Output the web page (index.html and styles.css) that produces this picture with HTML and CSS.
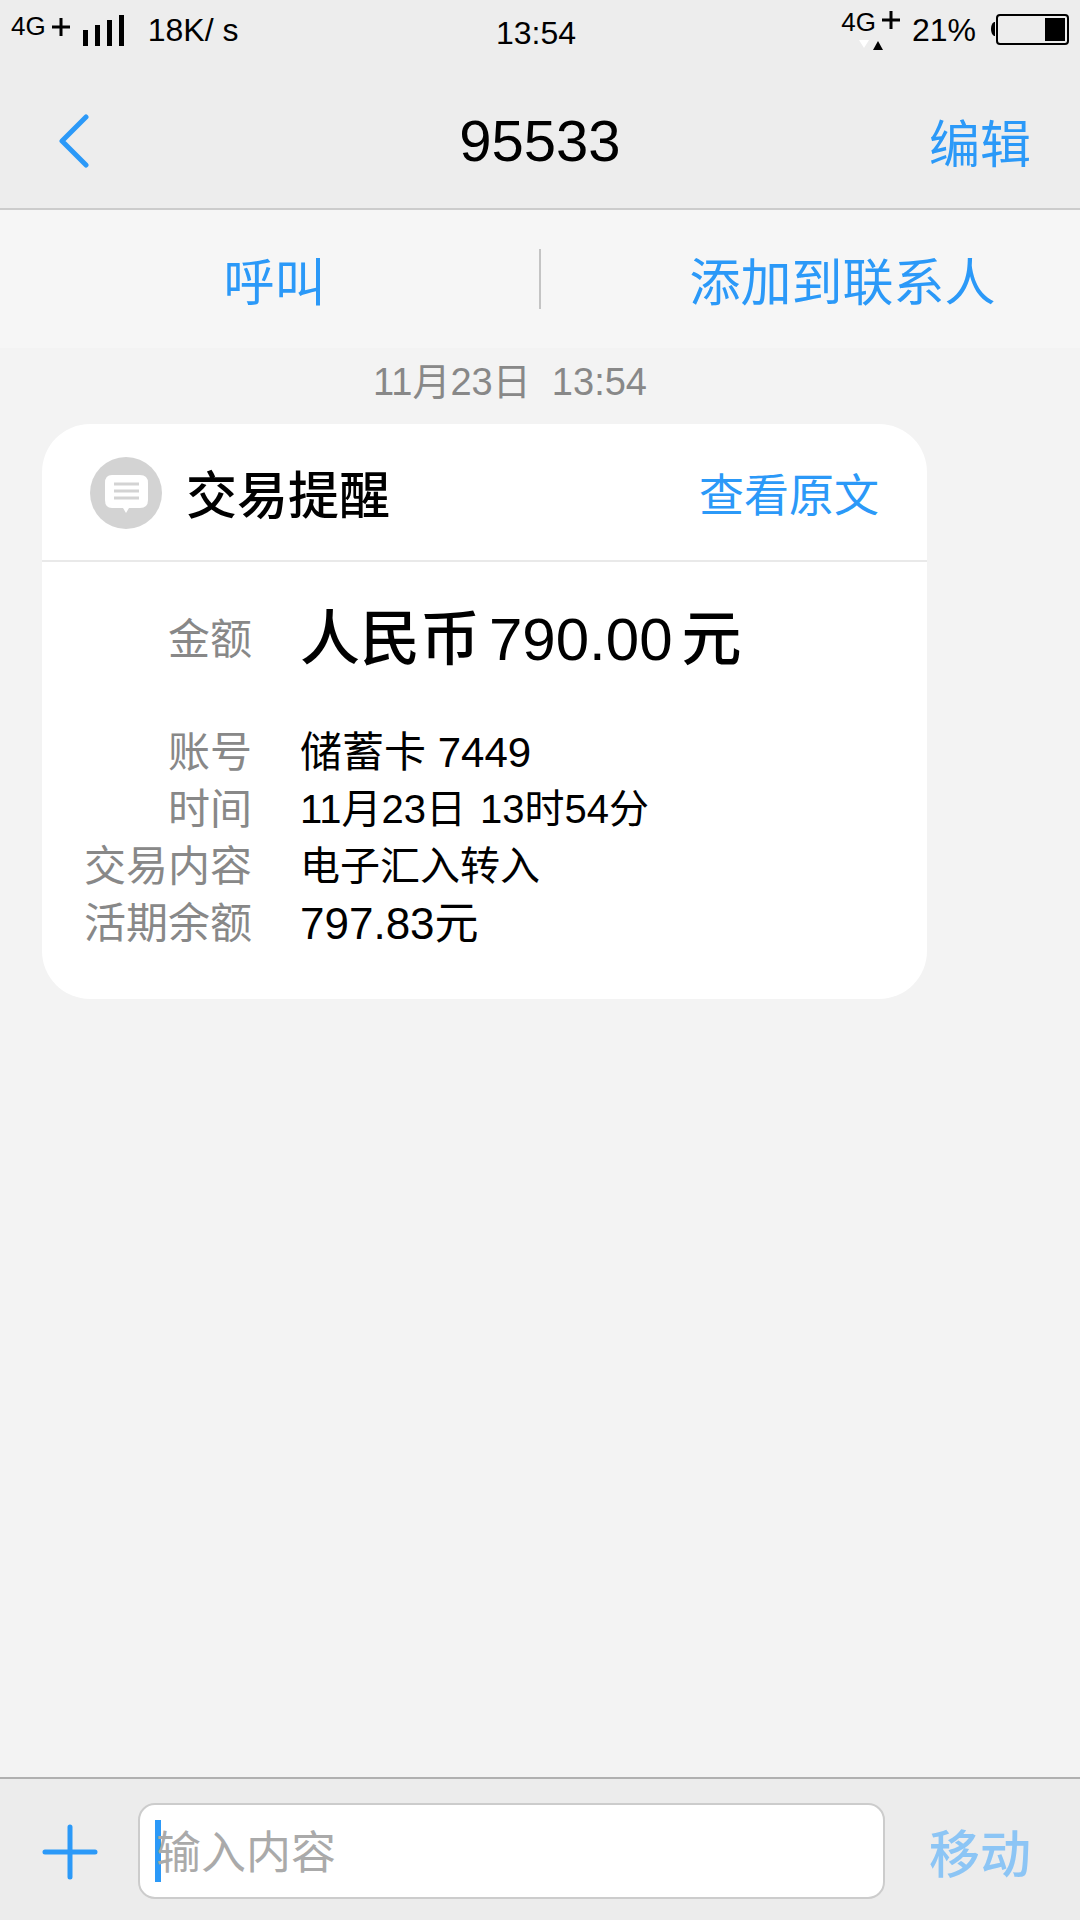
FILE: index.html
```html
<!DOCTYPE html>
<html lang="zh-CN">
<head>
    <meta charset="UTF-8">
    <meta name="viewport" content="width=device-width, initial-scale=1.0">
    <title>95533</title>
    <link rel="stylesheet" href="styles.css">
</head>
<body>
    <div class="status-bar">
        <div class="status-left">
            <span class="network">4G</span>
            <svg class="plus-small" width="18" height="18" viewBox="0 0 18 18"><path d="M9 0v18M0 9h18" stroke="#000" stroke-width="3"/></svg>
            <svg class="signal" width="41" height="31" viewBox="0 0 41 31"><path d="M0 15h5v16H0zM12 10h5v21h-5zM24 5h5v26h-5zM36 0h5v31h-5z"/></svg>
            <span class="speed">18K/ s</span>
        </div>
        <span class="clock">13:54</span>
        <div class="status-right">
            <div class="data">
                <div class="data-top">
                    <span class="network">4G</span>
                    <svg width="18" height="18" viewBox="0 0 18 18"><path d="M9 0v18M0 9h18" stroke="#000" stroke-width="3"/></svg>
                </div>
                <svg class="arrows" width="24" height="10" viewBox="0 0 24 10"><path d="M0 0h10L5 8z" fill="#fff"/><path d="M14 10h10l-5-9z"/></svg>
            </div>
            <span class="percent">21%</span>
            <svg class="battery" width="78" height="31" viewBox="0 0 78 31">
                <path d="M4 8v14H3q-3-2-3-7t3-7z"/>
                <rect x="6" y="1" width="71" height="29" rx="3" fill="none" stroke="#000" stroke-width="2"/>
                <rect x="54" y="4" width="20" height="23"/>
            </svg>
        </div>
    </div>

    <header class="header">
        <a class="back" href="#" aria-label="返回">
            <svg width="30" height="54" viewBox="0 0 30 54"><path d="M27 3L3 27l24 24" fill="none" stroke="#2b99f8" stroke-width="5" stroke-linecap="round" stroke-linejoin="round"/></svg>
        </a>
        <h1>95533</h1>
        <button type="button" class="edit">编辑</button>
    </header>

    <nav class="actions">
        <button type="button" class="call">呼叫</button>
        <span class="divider"></span>
        <button type="button" class="add">添加到联系人</button>
    </nav>

    <main class="messages">
        <p class="date">11月23日&nbsp; 13:54</p>
        <section class="card">
            <div class="card-header">
                <svg class="card-icon" width="72" height="72" viewBox="0 0 72 72">
                    <circle cx="36" cy="36" r="36" fill="#d3d3d3"/>
                    <path d="M22 18h28q8 0 8 8v17q0 8-8 8H39l-3 5-3-5H22q-7 0-7-8V26q0-8 7-8z" fill="#fff"/>
                    <path d="M24 27h25M24 34h25M24 41h25" stroke="#d3d3d3" stroke-width="3"/>
                </svg>
                <h2>交易提醒</h2>
                <a class="original" href="#">查看原文</a>
            </div>
            <dl class="details">
                <dt class="amount-label">金额</dt>
                <dd class="amount"><span>人民币</span><span>790.00</span><span>元</span></dd>
                <dt>账号</dt>
                <dd class="account">储蓄卡 7449</dd>
                <dt>时间</dt>
                <dd class="time"><span>11月23日</span><span>13时54分</span></dd>
                <dt>交易内容</dt>
                <dd>电子汇入转入</dd>
                <dt>活期余额</dt>
                <dd class="balance">797.83元</dd>
            </dl>
        </section>
    </main>

    <form class="composer">
        <button type="button" class="attach" aria-label="添加">
            <svg width="56" height="56" viewBox="0 0 56 56"><path d="M28 3v50M3 28h50" stroke="#2b99f8" stroke-width="5" stroke-linecap="round"/></svg>
        </button>
        <div class="field">
            <input type="text" id="message" aria-label="输入内容" placeholder="输入内容">
        </div>
        <button type="submit" class="send">移动</button>
    </form>
</body>
</html>
```
FILE: styles.css
```css
* {
    box-sizing: border-box;
}
body {
    display: flex;
    flex-direction: column;
    min-height: 100vh;
    margin: 0;
    background-color: #f3f3f3;
    color: #000;
    font-family: "Liberation Sans", "Noto Sans CJK SC", sans-serif;
}
h1, h2, p, dl, dd {
    margin: 0;
}
svg {
    display: block;
}
button {
    padding: 10px 0 0;
    border: none;
    background: none;
    color: #2b99f8;
    font-family: inherit;
    font-size: 51px;
    line-height: 60px;
    cursor: pointer;
}
a {
    color: #2b99f8;
    text-decoration: none;
}

/* status bar */
.status-bar {
    display: grid;
    grid-template-columns: 1fr auto 1fr;
    align-items: start;
    height: 64px;
    padding: 12px 11px 0;
    background-color: #ededed;
    font-size: 32px;
    line-height: 36px;
}
.status-left, .status-right, .data-top {
    display: flex;
    align-items: flex-start;
}
.status-right {
    justify-content: flex-end;
}
.network {
    font-size: 26px;
    line-height: 28px;
}
.plus-small {
    margin: 6px 13px 0 6px;
}
.signal {
    margin: 3px 24px 0 0;
}
.clock {
    padding: 3px 8px 0 0;
}
.data {
    margin-right: 12px;
}
.data-top {
    gap: 6px;
    height: 28px;
    margin-top: -4px;
}
.data-top svg {
    margin-top: 3px;
}
.arrows {
    margin: 4px 0 0 18px;
}
.percent {
    margin-right: 15px;
}
.battery {
    margin-top: 2px;
}

/* title bar */
.header {
    display: grid;
    grid-template-columns: 1fr auto 1fr;
    align-items: center;
    height: 146px;
    padding: 20px 49px 10px 59px;
    border-bottom: 2px solid #ccc;
    background-color: #ededed;
}
.header h1 {
    padding-right: 10px;
    font-size: 58px;
    font-weight: normal;
    line-height: 64px;
}
.edit {
    justify-self: end;
}
.back {
    justify-self: start;
}

.actions {
    display: grid;
    grid-template-columns: 1fr 2px 1fr;
    align-items: center;
    height: 138px;
    background-color: #f6f6f6;
}
.divider {
    height: 60px;
    background-color: #c4c4c4;
}
.actions .call {
    padding-left: 10px;
}
.actions .add {
    padding-left: 64px;
}

/* messages */
.messages {
    flex: 1;
}
.date {
    padding: 6px 60px 14px 0;
    color: #888;
    font-size: 38px;
    line-height: 56px;
    text-align: center;
}
.card {
    margin: 0 153px 0 42px;
    border-radius: 48px;
    background-color: #fff;
}
.card-header {
    display: flex;
    align-items: center;
    height: 138px;
    padding: 2px 48px 0;
    border-bottom: 2px solid #e9e9e9;
}
.card-header h2 {
    flex: 1;
    padding: 8px 0 0 24px;
    font-size: 51px;
    font-weight: 500;
    line-height: 60px;
}
.original {
    padding-top: 8px;
    font-size: 45px;
    line-height: 60px;
}
.details {
    display: grid;
    grid-template-columns: 168px 1fr;
    column-gap: 48px;
    padding: 38px 42px 47px;
    font-size: 40px;
    line-height: 57px;
}
.details dt {
    color: #888;
    font-size: 42px;
    text-align: right;
}
.details .amount-label, .details .amount {
    margin-bottom: 44px;
    line-height: 80px;
}
.amount {
    display: flex;
    gap: 9px;
    font-size: 60px;
    font-weight: 500;
}
.account {
    font-size: 42px;
}
.time {
    display: flex;
    gap: 14px;
}
.balance {
    font-size: 44px;
}

/* message box */
.composer {
    display: flex;
    align-items: center;
    height: 143px;
    padding: 2px 49px 0 42px;
    border-top: 2px solid #b0b0b0;
    background-color: #ececec;
}
.attach {
    padding-top: 2px;
}
.field {
    position: relative;
    flex: 1;
    height: 96px;
    margin: 0 44px 0 40px;
    border: 2px solid #ccc;
    border-radius: 17px;
    background-color: #fff;
}
/* text cursor, sits under the placeholder */
.field::before {
    content: "";
    position: absolute;
    top: 15px;
    left: 15px;
    width: 6px;
    height: 62px;
    background-color: #2b99f8;
}
.field input {
    position: relative;
    width: 100%;
    height: 100%;
    padding: 6px 15px 0 16px;
    border: none;
    outline: none;
    background: transparent;
    font-family: inherit;
    font-size: 45px;
}
.field input::placeholder {
    color: #aaa;
}
.send {
    color: #8cc5f5;
    font-weight: 500;
}
```
